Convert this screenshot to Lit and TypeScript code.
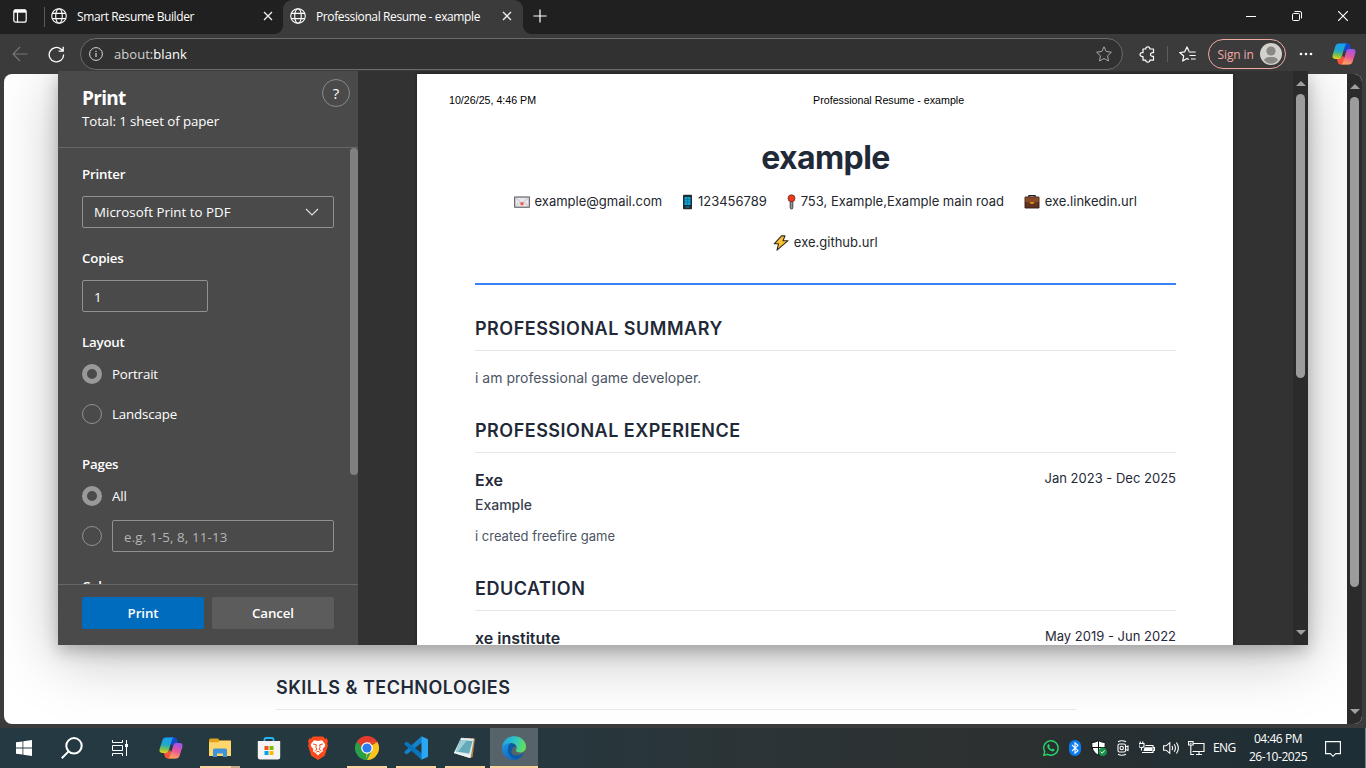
import { LitElement, html, css, svg } from "lit";
import { customElement } from "lit/decorators.js";

const globe = html`<svg width="16" height="16" viewBox="0 0 16 16" fill="none" stroke="#fff" stroke-width="1.1"><circle cx="8" cy="8" r="7.3"/><ellipse cx="8" cy="8" rx="3.3" ry="7.3"/><path d="M1.2 5.4h13.6M1.2 10.6h13.6"/></svg>`;
const cross = html`<svg width="10" height="10" viewBox="0 0 10 10" stroke="#f0f0f0" stroke-width="1.3"><path d="M1 1l8 8M9 1l-8 8"/></svg>`;

const copilot = (id: string, s: number) => html`<svg width=${s} height=${s} viewBox="0 0 24 24">
  <defs>
    <linearGradient id="${id}a" x1="0.3" y1="0" x2="0.2" y2="1"><stop offset="0" stop-color="#18a0f0"/><stop offset=".45" stop-color="#1fa8c8"/><stop offset=".75" stop-color="#7cc050"/><stop offset="1" stop-color="#f2cf1d"/></linearGradient>
    <linearGradient id="${id}b" x1="0.7" y1="0" x2="0.4" y2="1"><stop offset="0" stop-color="#9a55ee"/><stop offset=".5" stop-color="#e5569b"/><stop offset="1" stop-color="#ffa35c"/></linearGradient>
  </defs>
  <path d="M7.5 1.6h8c1.6 0 2.3 1 2.8 2.5l1 3.4h-2.6c-2 0-2.8 1-3.4 3z" fill="#1549c9"/>
  <path d="M16.500 22.400h-8c-1.600 0-2.300-1-2.800-2.500l-1-3.400h2.600c2 0 2.800-1 3.400-3z" fill="#f4543c"/>
  <path d="M6.800 1.600h8.200c-1.200.5-1.700 1.400-2.200 3L9.700 14.400c-.6 1.800-1.400 2.500-3.200 2.500H3.200c-2.500 0-3.200-1.800-2.500-4.100L3.300 4.500c.6-1.900 1.700-2.900 3.500-2.900z" fill="url(#${id}a)"/>
  <path d="M17.200 22.400H9c1.200-.5 1.700-1.400 2.200-3l3.100-9.800c.6-1.800 1.400-2.500 3.200-2.500h3.300c2.500 0 3.200 1.800 2.500 4.100l-2.600 8.300c-.6 1.900-1.700 2.900-3.500 2.900z" fill="url(#${id}b)"/>
</svg>`;

@customElement("browser-tabs")
class BrowserTabs extends LitElement {
  static styles = css`
    :host { display: flex; height: 34px; background: #202020; color: #fff; font: 12px "Open Sans", sans-serif; }
    .menu { width: 43px; padding-bottom: 2px; display: flex; align-items: center; justify-content: center; box-sizing: border-box; }
    .menu svg { margin-right: 3px; }
    .rule { width: 1px; height: 20px; background: #5a5a5a; margin: 7px 0 0 1px; }
    .tab { display: flex; align-items: center; box-sizing: border-box; height: 34px; padding: 0 10px 2px 6px; }
    .tab span { margin-left: 10px; flex: 1; white-space: nowrap; }
    .first { width: 238px; }
    .first span { letter-spacing: -0.4px; }
    .active { width: 240px; background: #3b3b3b; border-radius: 9px 9px 0 0; position: relative; padding-left: 7px; padding-right: 11px; }
    .active span { letter-spacing: -0.38px; }
    .active::before, .active::after { content: ""; position: absolute; bottom: 0; width: 8px; height: 8px; }
    .active::before { left: -8px; background: radial-gradient(circle at 0 0, transparent 7.5px, #3b3b3b 8px); }
    .active::after { right: -8px; background: radial-gradient(circle at 100% 0, transparent 7.5px, #3b3b3b 8px); }
    .plus { margin: 9px 0 0 10px; }
    .win { display: flex; margin-left: auto; }
    .win div { width: 46px; height: 32px; display: flex; align-items: center; justify-content: center; }
  `;
  render() {
    return html`
      <div class="menu"><svg width="14" height="14" viewBox="0 0 14 14" fill="none" stroke="#fff" stroke-width="1.2"><rect x=".8" y=".8" width="12.400" height="12.400" rx="2"/><path d="M1 2.200h12" stroke-width="3"/><path d="M4.500 3v10"/></svg></div>
      <div class="rule"></div>
      <div class="tab first">${globe}<span>Smart Resume Builder</span>${cross}</div>
      <div class="tab active">${globe}<span>Professional Resume - example</span>${cross}</div>
      <svg class="plus" width="14" height="14" viewBox="0 0 14 14" stroke="#fff" stroke-width="1.200"><path d="M7 .5v13M.5 7h13"/></svg>
      <div class="win">
        <div><svg width="10" height="10" viewBox="0 0 10 10"><path d="M0 5.500h10" stroke="#fff"/></svg></div>
        <div><svg width="10" height="10" viewBox="0 0 10 10" fill="none" stroke="#fff"><rect x=".5" y="2.500" width="7" height="7" rx="1"/><path d="M2.500.5h5.500q1.500 0 1.500 1.500v5.500"/></svg></div>
        <div><svg width="10" height="10" viewBox="0 0 10 10" stroke="#fff" stroke-width="1.200"><path d="M0 0l10 10M10 0L0 10"/></svg></div>
      </div>`;
  }
}

@customElement("browser-toolbar")
class BrowserToolbar extends LitElement {
  static styles = css`
    :host { display: flex; align-items: center; height: 40px; box-sizing: border-box; background: #3b3b3b; font: 13px "Open Sans", sans-serif; padding-left: 12px; }
    .reload { margin-left: 20px; }
    .address { box-sizing: border-box; width: 1043px; height: 32px; margin-left: 15px; border: 1px solid #6b6b6b; border-radius: 16px; background: #313131; color: #fff; display: flex; align-items: center; padding: 0 10px 0 8px; }
    .url { flex: 1; margin-left: 11px; letter-spacing: 0.050px; }
    .url i { font-style: normal; color: #d0d0d0; }
    .ext { margin-left: 16px; }
    .rule { width: 1px; height: 16px; background: #5c5c5c; margin: 0 11px 0 12px; }
    .signin { box-sizing: border-box; margin-left: 12px; width: 78px; height: 30px; border: 1px solid #efaaa4; border-radius: 15px; display: flex; align-items: center; justify-content: space-between; color: #efaaa4; font-size: 12px; letter-spacing: -0.100px; padding: 0 3px 0 8.500px; white-space: nowrap; }
    .dots { margin-left: 13px; }
    .cop { margin-left: 19px; display: flex; }
  `;
  render() {
    return html`
      <svg width="16" height="16" viewBox="0 0 16 16" fill="none" stroke="#777" stroke-width="1.100"><path d="M15.500 8H1M8 1L1 8l7 7"/></svg>
      <svg class="reload" width="17" height="17" viewBox="0 0 17 17" fill="none" stroke="#fff" stroke-width="1.300"><path d="M15.600 8.500A7.200 7.200 0 1 1 13.200 3.300L15 5M15.200.7V5.200H10.600"/></svg>
      <div class="address">
        <svg width="14" height="14" viewBox="0 0 14 14" fill="none" stroke="#d6d6d6"><circle cx="7" cy="7" r="6.400"/><path d="M7 6v4M7 3.800v1.200" stroke-width="1.200"/></svg>
        <span class="url"><i>about:</i>blank</span>
        <svg width="16" height="16" viewBox="0 0 16 16" fill="none" stroke="#a8a8a8" stroke-linejoin="round"><path d="M8 .8l2.200 4.700 5.200.7-3.800 3.600.9 5.200L8 12.500 3.500 15l.9-5.200L.6 6.200l5.200-.7z"/></svg>
      </div>
      <svg class="ext" width="16" height="17" viewBox="0 0 16 17" fill="none" stroke="#fff" stroke-width="1.200" stroke-linejoin="round"><path d="M4 3h2.800C6.500 1.700 7.500.8 8.800.8s2.300.9 2 2.200H14.500v3.700c-1.700-.4-3 .4-3 1.800s1.300 2.300 3 1.800V14.200H10.800c.3 1.200-.7 2-2 2s-2.300-.8-2-2H4v-3.700C2.200 10.700 1 9.900 1 8.500s1.200-2.200 3-1.900z"/></svg>
      <div class="rule"></div>
      <svg width="17" height="17" viewBox="0 0 17 17" fill="none" stroke="#fff" stroke-width="1.200" stroke-linejoin="round"><path d="M9.800 13.500L8 12.400 3.700 15l1-5L.7 6.500l5-.7L8 1l2 4.200M9.700 6h7M10.500 9.500h6.200M12 13h4.700"/></svg>
      <div class="signin">Sign in<svg width="22" height="22" viewBox="0 0 22 22"><circle cx="11" cy="11" r="11" fill="#d3d1ce"/><circle cx="11" cy="8" r="4.600" fill="#8c8884"/><path d="M3.800 17q2-3 5-3h4.400q3 0 5 3-3 3.700-7.200 3.700T3.800 17z" fill="#8c8884"/></svg></div>
      <svg class="dots" width="14" height="4" viewBox="0 0 14 4" fill="#fff"><circle cx="2" cy="2" r="1.300"/><circle cx="7" cy="2" r="1.300"/><circle cx="12" cy="2" r="1.300"/></svg>
      <div class="cop">${copilot("t", 24)}</div>`;
  }
}

@customElement("print-settings")
class PrintSettings extends LitElement {
  static styles = css`
    :host { display: flex; flex-direction: column; width: 300px; height: 574px; background: #4a4a4a; color: #fff; font: 13.300px/20px "Open Sans", sans-serif; letter-spacing: -0.080px; }
    .head { height: 76px; box-sizing: content-box; border-bottom: 1px solid #666; display: flex; justify-content: space-between; padding: 0 8px 0 24px; }
    h1 { font-size: 19px; line-height: 26px; font-weight: 700; margin: 14px 0 0; letter-spacing: -0.700px; }
    .help { box-sizing: border-box; width: 28px; height: 28px; border: 1px solid #8a8a8a; border-radius: 50%; margin-top: 8px; text-align: center; line-height: 26px; font-size: 15px; }
    .body { flex: 1; min-height: 0; overflow: hidden; display: flex; justify-content: space-between; }
    .form { width: 252px; padding: 16px 0 0 24px; }
    .bar { width: 8px; height: 327px; border-radius: 4px; background: #808080; }
    .lab { font-weight: 600; display: block; letter-spacing: -0.200px; }
    .box { box-sizing: border-box; height: 32px; border: 1px solid #919191; border-radius: 2px; padding: 0 14px 0 11px; display: flex; align-items: center; justify-content: space-between; margin: 12px 0 20px; letter-spacing: 0.030px; }
    .copies { width: 126px; padding-top: 2px; }
    .radio { display: flex; align-items: center; gap: 10px; height: 20px; margin-bottom: 20px; letter-spacing: -0.140px; }
    .dot { box-sizing: border-box; width: 20px; height: 20px; border-radius: 50%; border: 1px solid #919191; flex: none; }
    .on { border: 5px solid #999; }
    .layout { margin-top: 12px; }
    .pages { margin-top: 12px; margin-bottom: 14px; }
    .group { padding-bottom: 10px; }
    .range { height: 32px; margin-bottom: 24px; }
    .range .box { flex: 1; margin: 0; color: #b5b5b5; padding-top: 2px; letter-spacing: 0.160px; }
    .foot { height: 61px; box-sizing: border-box; border-top: 1px solid #666; padding: 12px 24px 0; display: flex; gap: 8px; }
    .foot div { flex: 1; height: 32px; line-height: 32px; text-align: center; font-weight: 600; background: #5c5c5c; border-radius: 2px; letter-spacing: -0.100px; }
    .foot .go { background: #006cbe; }
  `;
  render() {
    return html`
      <div class="head"><div><h1>Print</h1>Total: 1 sheet of paper</div><div class="help">?</div></div>
      <div class="body">
        <div class="form">
          <span class="lab">Printer</span>
          <div class="box">Microsoft Print to PDF<svg width="14" height="8" viewBox="0 0 14 8" fill="none" stroke="#ddd" stroke-width="1.200"><path d="M1 1l6 6 6-6"/></svg></div>
          <span class="lab">Copies</span>
          <div class="box copies">1</div>
          <span class="lab">Layout</span>
          <div class="radio layout"><i class="dot on"></i>Portrait</div>
          <div class="radio group"><i class="dot"></i>Landscape</div>
          <span class="lab">Pages</span>
          <div class="radio pages"><i class="dot on"></i>All</div>
          <div class="radio range"><i class="dot"></i><div class="box">e.g. 1-5, 8, 11-13</div></div>
          <span class="lab">Color</span>
        </div>
        <div class="bar"></div>
      </div>
      <div class="foot"><div class="go">Print</div><div>Cancel</div></div>`;
  }
}

const icons = {
  mail: html`<svg width="16" height="16" viewBox="0 0 16 16"><rect x=".7" y="3" width="14.600" height="10.200" fill="#e9e7ec" stroke="#4a4a4a"/><path d="M1.200 3.500L8 9l6.800-5.500M1.200 12.700l4.500-4.500M14.800 12.700l-4.500-4.500" fill="none" stroke="#bdbac2" stroke-width=".8"/><circle cx="8" cy="9.800" r="1.800" fill="#f0604f"/></svg>`,
  phone: html`<svg width="11" height="16" viewBox="-.5 0 11 16"><rect x=".5" y=".7" width="9" height="14.600" rx=".8" fill="#222b30"/><path d="M2 3h6v8H2z" fill="#07a5dc"/><path d="M2 5.500h6M2 8h6M5 3v8" stroke="#17617c" stroke-width=".6"/><path d="M3 13h4" stroke="#078cbd"/></svg>`,
  pin: html`<svg width="9" height="16" viewBox="-.5 0 9 16"><rect x="2.700" y="7" width="2.600" height="8" rx="1.300" fill="#999" stroke="#333" stroke-width=".9"/><circle cx="4" cy="4.300" r="3.500" fill="#f03a17" stroke="#53241d" stroke-width=".7"/></svg>`,
  bag: html`<svg width="16" height="16" viewBox="0 0 16 16"><path d="M5 3.500V1.600h6v1.900" fill="none" stroke="#222" stroke-width="1.400"/><path d="M1 3h14v11H1z" fill="#63321e" stroke="#2b1b15" stroke-width=".9"/><path d="M1.300 3.300h13.400V8L8 9 1.300 8z" fill="#8b4926"/><path d="M6.300 8h3.400v1.800H6.300z" fill="#ed9a13"/></svg>`,
  bolt: html`<svg width="16" height="16" viewBox="0 0 16 16"><path d="M8.500.9L1.200 8.800h4.300L4 15.200l11-9.500h-5L12 .9z" fill="#fbc22b" stroke="#2d2920" stroke-width="1.100" stroke-linejoin="round"/></svg>`,
};

@customElement("print-preview")
class PrintPreview extends LitElement {
  static styles = css`
    :host { display: flex; flex: 1; height: 574px; background: #323232; overflow: hidden; font-family: Inter, sans-serif; color: #1f2937; }
    .page { width: 816px; margin: 3px 0 0 59px; height: 571px; background: #fff; box-sizing: border-box; padding: 20px 57px 0 58px; overflow: hidden; box-shadow: 0 0 3px #1b1b1b; }
    .print { display: flex; gap: 277px; font: 10.670px/13px "Liberation Sans", Arial, sans-serif; color: #000; margin-left: -26px; white-space: nowrap; }
    h1 { font-size: 32px; line-height: 40px; font-weight: 700; text-align: center; margin: 31px 0 0; letter-spacing: -0.600px; }
    .contacts { display: flex; flex-wrap: wrap; justify-content: center; font-size: 13px; line-height: 21px; gap: 20px 20.300px; margin: 13px 0 30px; color: #24272d; }
    .contacts span { display: flex; align-items: center; gap: 4.500px; white-space: nowrap; }
    .line { height: 2px; background: #3b82f6; margin-bottom: 33px; }
    h2 { font-size: 18px; line-height: 22px; font-weight: 600; margin: 0 0 16px; padding-bottom: 10px; border-bottom: 1px solid #e5e7eb; letter-spacing: 0.500px; }
    p { margin: 0; font-size: 14px; line-height: 22px; color: #4b5563; }
    .sum { margin-bottom: 31px; }
    .row { display: flex; justify-content: space-between; }
    .row b { font-size: 16px; line-height: 22px; font-weight: 600; }
    .row time { font-size: 13px; line-height: 18px; color: #1f2937; }
    .role { font-size: 14px; font-weight: 500; line-height: 20px; color: #374151; margin: 4px 0 10px; }
    .small { font-size: 13px; margin-bottom: 31px; }
    .scroll { width: 15px; margin-left: auto; background: #2b2b2b; display: flex; flex-direction: column; align-items: center; }
    .up, .down { width: 0; height: 0; border: 5px solid transparent; }
    .up { border-top: 0; border-bottom-color: #a0a0a0; margin: 10px 0 8px; }
    .thumb { width: 9px; height: 284px; border-radius: 4.500px; background: #9c9c9c; }
    .down { border-bottom: 0; border-top-color: #a0a0a0; margin-top: auto; margin-bottom: 10px; }
  `;
  render() {
    return html`
      <div class="page">
        <div class="print"><span>10/26/25, 4:46 PM</span><span>Professional Resume - example</span></div>
        <h1>example</h1>
        <div class="contacts">
          <span>${icons.mail}example@gmail.com</span><span>${icons.phone}123456789</span><span>${icons.pin}753, Example,Example main road</span><span>${icons.bag}exe.linkedin.url</span><span>${icons.bolt}exe.github.url</span>
        </div>
        <div class="line"></div>
        <h2>PROFESSIONAL SUMMARY</h2>
        <p class="sum">i am professional game developer.</p>
        <h2>PROFESSIONAL EXPERIENCE</h2>
        <div class="row"><b>Exe</b><time>Jan 2023 - Dec 2025</time></div>
        <div class="role">Example</div>
        <p class="small">i created freefire game</p>
        <h2>EDUCATION</h2>
        <div class="row"><b>xe institute</b><time>May 2019 - Jun 2022</time></div>
      </div>
      <div class="scroll"><i class="up"></i><div class="thumb"></div><i class="down"></i></div>`;
  }
}

const store = svg`<path d="M7.500 6V3.500q0-1.500 1.500-1.500h6q1.500 0 1.500 1.500V6" fill="none" stroke="#24b5f4" stroke-width="1.800"/><path d="M.8 5h22.400v16q0 2.500-2.500 2.500H3.300Q.8 23.500.8 21z" fill="#f4f4f4"/><path d="M7.500 10h4v4h-4z" fill="#f25022"/><path d="M12.500 10h4v4h-4z" fill="#7fba00"/><path d="M7.500 15h4v4h-4z" fill="#00a4ef"/><path d="M12.500 15h4v4h-4z" fill="#ffb900"/>`;
const folder = svg`<path d="M1 4q0-1.500 1.500-1.500H10l1.500 2H22q1 0 1 1V20H1z" fill="#e6a11c"/><path d="M1 6.200h9l1.500-1.500H23V20H1z" fill="#ffd66b"/><path d="M5 21v-7q0-1.500 1.500-1.500h11Q19 12.500 19 14v7h-4v-3.500H9V21z" fill="#3f93dc"/>`;
const brave = svg`<path d="M7 .5h10l2 2.200 1.800-.4L22 5.500l-.8 2 .7 2.200-3.200 10L12 24l-6.700-4.300-3.200-10 .7-2.200-.8-2L3.200 2.300l1.800.4z" fill="#fb4a1c"/><path d="M12 5l4-.8 3.200 4-.4 2.300-2.200 2.600.5 2.200-2.700 1.700L12 19.500 9.600 17l-2.700-1.700.5-2.200-2.200-2.600-.4-2.300 3.200-4z" fill="#fff"/><path d="M7 8l3.300.7-.4 2.500 1 2.200L8.500 15M17 8l-3.300.7.4 2.500-1 2.200 2.400 1.600M10.200 16.200l1.800-1 1.800 1" fill="none" stroke="#fb4a1c" stroke-width="1"/>`;
const chrome = svg`<path d="M12 12L1.600 6A12 12 0 0 1 22.400 6z" fill="#e33b2e"/><path d="M12 12v12A12 12 0 0 1 1.600 6z" fill="#2a9f48"/><path d="M12 12l10.400-6A12 12 0 0 1 12 24l-1-1z" fill="#fcc31e"/><path d="M12 6.500h10.700L22.400 6H12zM16.800 14.700L12 24h-1.500z" fill="#fcc31e"/><path d="M16.800 14.700L12 24h-1.500l3-8zM2.500 5l4.700 9.800 2-5z" fill="#2a9f48"/><path d="M2.200 5L7.500 12 12 6.500h10.500L22 5z" fill="#e33b2e"/><circle cx="12" cy="12" r="5.800" fill="#fff"/><circle cx="12" cy="12" r="4.600" fill="#2b7cf0"/>`;
const code = svg`<path d="M17.500.3L.6 15.400q-.7.700 0 1.300L2 18q.6.500 1.300 0L18 6.600z" fill="#1282cd"/><path d="M17.500 23.700L.6 8.600q-.7-.7 0-1.300L2 6q.6-.5 1.300 0L18 17.400z" fill="#0a74bd"/><path d="M17.500.3L24 3.200v17.600l-6.500 2.900z" fill="#2ba6f2"/>`;
const note = svg`<path d="M9 2l13 .6-2.500 18.600L16 22z" fill="#b3854a"/><path d="M8 2l12.800 1.300L17.500 22 .8 17z" fill="#d9ecee"/><path d="M7.500 4l12 1-3.300 12.500L3 15.500z" fill="#64aab8"/><path d="M8.200 4l5.500.5L5 15.800l-2-.3z" fill="#9bd0d8"/><path d="M8 2.700l12.800.8" stroke="#efefef" stroke-width="2" stroke-dasharray="1.400 .7"/><path d="M.8 17l15.800 5 .8-2.500-15.800-3z" fill="#f3f3f3"/>`;
const edge = svg`<defs><linearGradient id="eg" x1="0" y1=".2" x2="1" y2=".4"><stop offset="0" stop-color="#21a2e4"/><stop offset=".5" stop-color="#2cc3c9"/><stop offset="1" stop-color="#63e05b"/></linearGradient><linearGradient id="eb" x1="0" y1="0" x2="1" y2="1"><stop offset="0" stop-color="#1b97e3"/><stop offset="1" stop-color="#0c55b5"/></linearGradient></defs><path d="M.1 12C1 8.500 4.500 6.800 8.700 7 5.500 9 5.500 20 14.500 19.600c3.400-.1 5.500-1.500 7.300-2.600C20 21 16.500 23.900 12 23.900 5 23.900-.4 18.500.1 12z" fill="url(#eb)"/><path d="M8.700 7.300c-4 2.500-4 12 2.300 14.700 4.500 2 8.800-1.500 10.800-5-1.800 1.100-3.900 2.500-7.300 2.600-5 .2-6.500-4.500-3.800-7.300.3-1.800 2.200-1.500 3.500-1.200C14 8.500 11.500 7 8.700 7.300z" fill="#0c59a4"/><path d="M.2 11.500C.6 5 5.500.2 12 .2c7 0 12 5 12 10.300 0 4-3 6-6 6-2.700 0-4.200-1-4.200-2 0-.6.900-1 .9-3 0-2.300-2.200-4.500-5.700-4.500C5 7 1.500 9 .2 11.500z" fill="url(#eg)"/>`;

@customElement("task-bar")
class TaskBar extends LitElement {
  static styles = css`
    :host { display: flex; height: 40px; background: linear-gradient(90deg, #243942 0, #25383f 36%, #2a3539 50%, #2d3030 73%, #252f33 84%, #1c2e36 100%); color: #fff; font: 12px/18px "Open Sans", sans-serif; }
    .cell { width: 48px; height: 40px; display: flex; align-items: center; justify-content: center; box-sizing: border-box; margin-right: 1px; }
    .sys { margin-right: 0; }
    .apps { display: flex; padding-left: 3px; }
    .run { background: linear-gradient(#fdd3a0, #fdd3a0) center bottom / 40px 2px no-repeat; }
    .multi { background: linear-gradient(90deg, #fdd3a0 31px, #c4a88a 31px) center bottom / 40px 2px no-repeat; }
    .current { background: linear-gradient(#fdd3a0, #fdd3a0) center bottom / 48px 2px no-repeat, #56646a; margin: 0; }
    .tray { margin-left: auto; display: flex; align-items: center; padding-right: 4px; }
    .icons { display: flex; align-items: center; gap: 8px; margin-right: 8px; }
    .lang { letter-spacing: -0.550px; width: 35px; }
    .clock { text-align: center; width: 60px; letter-spacing: -0.450px; white-space: nowrap; }
    .msg { margin: 2px 20px 0 17px; }
    .edge { width: 1px; height: 40px; background: #75838a; }
  `;
  app(body: unknown, cls = "") {
    return html`<div class="cell ${cls}"><svg width="24" height="24" viewBox="0 0 24 24">${body}</svg></div>`;
  }
  render() {
    return html`
      <div class="cell sys"><svg width="16" height="16" viewBox="0 0 16 16" fill="#fff"><path d="M0 2.300l6.500-.9v6.200H0zM7.300 1.300L16 0v7.600H7.300zM0 8.400h6.500v6.200L0 13.700zM7.300 8.400H16V16l-8.700-1.200z"/></svg></div>
      <div class="cell sys"><svg width="22" height="22" viewBox="0 0 22 22" fill="none" stroke="#fff" stroke-width="2"><circle cx="13" cy="8.800" r="7.700"/><path d="M7.600 14.400L.8 21.200"/></svg></div>
      <div class="cell sys"><svg width="16" height="16" viewBox="0 0 16 16" fill="none" stroke="#fff" stroke-width="1"><path d="M.5 0v2.500h10V0M.5 16v-2.500h10V16M.5 5.500h10v5H.5zM14.500 0v16"/><path d="M13 4h3v3h-3z" fill="#fff" stroke="none"/></svg></div>
      <div class="apps">
        <div class="cell">${copilot("b", 24)}</div>
        ${this.app(folder, "multi")}${this.app(store)}${this.app(brave)}${this.app(chrome, "run")}${this.app(code, "run")}${this.app(note, "run")}${this.app(edge, "current")}
      </div>
      <div class="tray">
        <div class="icons">
          <svg width="16" height="16" viewBox="0 0 16 16"><path d="M.7 15.400l1-3.800A7.200 7.200 0 1 1 4.500 14.300z" fill="none" stroke="#27d467" stroke-width="1.400"/><path d="M5 4.200h1l.8 1.900-.7.900q.9 1.700 2.700 2.500l.9-1 1.900.9q0 2-2.100 2Q6.600 11.200 4.700 8 3.700 5.700 5 4.200z" fill="#27d467"/></svg>
          <svg width="16" height="16" viewBox="0 0 16 16"><rect x="2" width="12" height="16" rx="6" fill="#0a7bf0"/><path d="M5 5l6 5.700-3 2.500V2.800l3 2.500L5 11" fill="none" stroke="#fff" stroke-width="1.100"/></svg>
          <svg width="16" height="16" viewBox="0 0 16 16"><path d="M7.500.5q3 2 6.700 2 .8 9-6.700 13Q0 11.500.8 2.500q3.700 0 6.700-2z" fill="#fff" stroke="#111"/><path d="M7.500 1v14M1 7.500h13" stroke="#111"/><circle cx="11.700" cy="11.700" r="4.300" fill="#159447"/><path d="M9.700 11.700l1.500 1.500 2.600-2.800" stroke="#fff" fill="none"/></svg>
          <svg width="16" height="16" viewBox="0 0 16 16" fill="none" stroke="#fff" stroke-width="1.100"><rect x="3" y="4" width="7.500" height="8" rx="1.500"/><circle cx="6.700" cy="8" r="1.700"/><path d="M10.500 7l2.500-1v4.500l-2.500-1M3 1.800Q7 -.4 11 1.800M3 14.300q4 2 8 0"/></svg>
          <svg width="16" height="16" viewBox="0 0 16 16" fill="none" stroke="#fff" stroke-width="1.100"><path d="M3 12.500h11v-7H6.500M14.500 7.500h1v3h-1M0 3.500h5v2.500q0 1.500-2.500 1.500T0 6zM1.200 1.500v2M3.800 1.500v2M2.500 7.500v3"/><path d="M5.500 7.200H13v3.800H4.500z" fill="#fff" stroke="none"/></svg>
          <svg width="17" height="16" viewBox="0 0 17 16" fill="none" stroke="#fff" stroke-width="1.100"><path d="M.6 5.800h2.600L6.800 2.600v10.800L3.200 10.200H.6zM9 6q1.200 2 0 4M11.200 4.200q2.500 3.800 0 7.600M13.400 2.500q4 5.500 0 11"/></svg>
          <svg width="17" height="16" viewBox="1 0 17 16" fill="none" stroke="#fff" stroke-width="1.100"><path d="M6.500 3.500h10.500v8H5.500M9 14.500h6M12 11.500v3M1.600 1.500h4.500V5H1.600zM3.800 5v9.500H7M3 3.200h1.600"/></svg>
        </div>
        <div class="lang">ENG</div>
        <div class="clock">04:46 PM<br>26-10-2025</div>
        <svg class="msg" width="16" height="17" viewBox="0 0 16 17" fill="none" stroke="#fff" stroke-width="1.100"><path d="M.6.6h14.800v12h-4.700L8 15.300l-2.700-2.700H.6z"/></svg>
      </div>
      <div class="edge"></div>`;
  }
}

@customElement("app-root")
class AppRoot extends LitElement {
  static styles = css`
    :host { display: flex; flex-direction: column; position: relative; width: 1366px; height: 768px; overflow: hidden; background: #3b3b3b; }
    .view { display: flex; height: 650px; margin: 0 4px 4px; border-radius: 8px; overflow: hidden; background: #fff; position: relative; }
    .doc { flex: 1; display: flex; flex-direction: column; justify-content: flex-end; padding: 0 271px 14px 272px; }
    h2 { margin: 0; font: 600 18px/22px Inter, sans-serif; letter-spacing: 0.500px; color: #1f2937; padding-bottom: 10px; border-bottom: 1px solid #e5e7eb; z-index: 1; }
    .scroll { width: 15px; background: #2b2b2b; display: flex; flex-direction: column; align-items: center; z-index: 1; }
    .up, .down { width: 0; height: 0; border: 5px solid transparent; }
    .up { border-top: 0; border-bottom-color: #a0a0a0; margin: 10px 0 8px; }
    .thumb { width: 9px; height: 490px; border-radius: 4.500px; background: #9c9c9c; }
    .down { border-bottom: 0; border-top-color: #a0a0a0; margin-top: auto; margin-bottom: 10px; }
    .shade { position: absolute; left: 54px; top: -3px; width: 1250px; height: 574px; box-shadow: 0 12px 58px rgba(0,0,0,.26), 0 6px 16px rgba(0,0,0,.24); }
    .dialog { position: absolute; left: 58px; top: 71px; width: 1250px; height: 574px; display: flex; }
  `;
  render() {
    return html`
      <browser-tabs></browser-tabs>
      <browser-toolbar></browser-toolbar>
      <div class="view">
        <div class="shade"></div>
        <div class="doc"><h2>SKILLS &amp; TECHNOLOGIES</h2></div>
        <div class="scroll"><i class="up"></i><div class="thumb"></div><i class="down"></i></div>
      </div>
      <task-bar></task-bar>
      <div class="dialog"><print-settings></print-settings><print-preview></print-preview></div>`;
  }
}
